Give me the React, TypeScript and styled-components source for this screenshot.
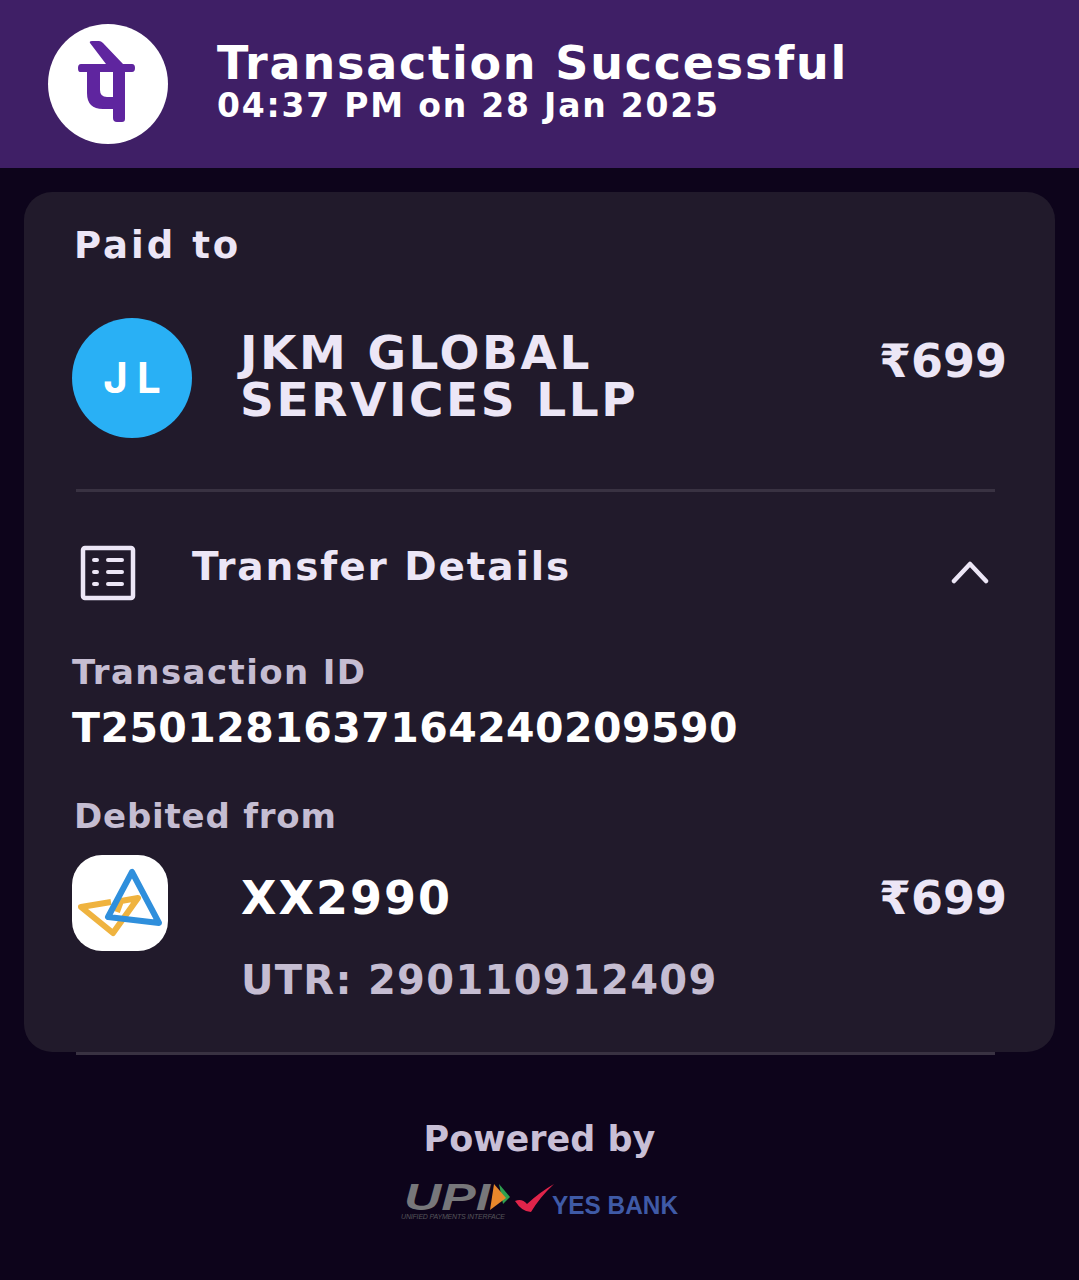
import styled, { createGlobalStyle } from "styled-components";

const GlobalStyle = createGlobalStyle`
  html, body {
    margin: 0;
    padding: 0;
    background: #0d041b;
  }
  body {
    font-family: "DejaVu Sans", "Noto Sans", sans-serif;
    font-weight: 700;
    color: #ece6f6;
  }
`;

const Page = styled.div`
  width: 1079px;
  height: 1280px;
  overflow: hidden;
  background: #0d041b;
`;

const Header = styled.header`
  height: 168px;
  box-sizing: border-box;
  padding-left: 48px;
  display: flex;
  align-items: center;
  gap: 49px;
  background: #3f1f66;
`;

const LogoCircle = styled.div`
  width: 120px;
  height: 120px;
  border-radius: 50%;
  background: #ffffff;
`;

const HeaderText = styled.div`
  display: flex;
  flex-direction: column;
`;

const HeaderTitle = styled.div`
  font-size: 46px;
  line-height: 44px;
  letter-spacing: 1.8px;
  color: #ffffff;
`;

const HeaderDate = styled.div`
  font-size: 33px;
  line-height: 42px;
  letter-spacing: 1.8px;
  color: #ffffff;
`;

const Card = styled.section`
  margin: 24px 24px 0;
  height: 860px;
  box-sizing: border-box;
  padding-top: 34px;
  border-radius: 28px;
  background: #211a2b;
`;

const SectionLabel = styled.div`
  margin-left: 50px;
  font-size: 37px;
  line-height: 40px;
  letter-spacing: 3px;
  color: #ece6f6;
`;

const PartyRow = styled.div`
  margin: 52px 48px 0 48px;
  display: grid;
  grid-template-columns: 120px 1fr auto;
  column-gap: 48px;
  height: 120px;
`;

const Avatar = styled.div`
  width: 120px;
  height: 120px;
  border-radius: 50%;
  background: #29b0f5;
  color: #ffffff;
  display: flex;
  align-items: center;
  justify-content: center;
  font-family: "Inter", sans-serif;
  font-size: 42px;
  line-height: 1;
  letter-spacing: 9px;
  text-indent: 9px;
`;

const PartyName = styled.div`
  padding-top: 11px;
  font-size: 47px;
  line-height: 47px;
  letter-spacing: 2.6px;
  color: #ece6f6;
`;

const Amount = styled.div`
  padding-top: 20px;
  font-size: 46px;
  line-height: 47px;
  color: #ece6f6;
`;

const Rule = styled.div`
  height: 3px;
  background: #393242;
`;

const CardRule = styled(Rule)`
  margin: 51px 60px 0 52px;
`;

const DetailsHead = styled.div`
  margin: 52px 66px 0 56px;
  display: grid;
  grid-template-columns: 56px 1fr auto;
  column-gap: 56px;
  align-items: center;
  height: 58px;
`;

const DetailsTitle = styled.div`
  margin-top: -12px;
  font-size: 39px;
  line-height: 44px;
  letter-spacing: 1.9px;
  color: #ece6f6;
`;

const MutedLabel = styled.div<{ $top: number; $inset?: number; $spacing: number }>`
  margin: ${(p) => p.$top}px 0 0 ${(p) => p.$inset ?? 48}px;
  font-size: 34px;
  line-height: 40px;
  letter-spacing: ${(p) => p.$spacing}px;
  color: #c5bdd2;
`;

const TransactionId = styled.div`
  margin: 14px 0 0 48px;
  font-size: 41px;
  line-height: 44px;
  letter-spacing: 0.45px;
  color: #ffffff;
`;

const BankRow = styled.div`
  margin: 19px 48px 0 48px;
  display: grid;
  grid-template-columns: 96px 1fr auto;
  column-gap: 73px;
  height: 96px;
`;

const BankIcon = styled.div`
  width: 96px;
  height: 96px;
  border-radius: 30px;
  background: #ffffff;
`;

const Account = styled.div`
  padding-top: 20px;
  font-size: 46px;
  line-height: 47px;
  letter-spacing: 2px;
  color: #ffffff;
`;

const Utr = styled.div`
  margin: 6px 0 0 217px;
  font-size: 40px;
  line-height: 47px;
  letter-spacing: 1.3px;
  color: #c5bdd2;
`;

const PageRule = styled(Rule)`
  margin: 0 84px 0 76px;
`;

const Footer = styled.footer`
  margin-top: 64px;
  display: flex;
  flex-direction: column;
  align-items: center;
`;

const PoweredBy = styled.div`
  font-size: 35px;
  line-height: 40px;
  color: #c8bfd6;
`;

const Brands = styled.div`
  margin-top: 14px;
  display: flex;
  align-items: center;
`;

const PhonePeMark = () => (
  <svg width="120" height="120" viewBox="0 0 120 120" fill="none">
    <path
      fillRule="evenodd"
      d="M42 19 Q41 17 44 17 L51 17 Q53 17 55 19 L75 40 L84 40 Q87 40 87 44 Q87 48 84 48 L77 48 L77 95 Q77 98 74 98 L69 98 Q65 98 65 94 L65 85 L55 85 Q39 85 39 69 L39 48 L32 48 Q30 48 30 44 Q30 40 33 40 L58 40 Z M52 48 L52 66 Q52 73 59 73 L65 73 L65 48 Z"
      fill="#5f259f"
    />
  </svg>
);

const DocListIcon = () => (
  <svg width="56" height="56" viewBox="0 0 56 56" fill="none" stroke="#ece6f6" strokeLinecap="round">
    <rect x="3" y="3" width="50" height="50" rx="2" strokeWidth="4.5" />
    <path d="M14 15h3M28 15h14M14 27h3M28 27h14M14 39h3M28 39h14" strokeWidth="4" />
  </svg>
);

const ChevronUp = () => (
  <svg width="38" height="24" viewBox="0 0 38 24" fill="none" stroke="#ece6f6" strokeWidth="4.5" strokeLinecap="round" strokeLinejoin="round">
    <path d="M3 20 L19 3 L35 20" />
  </svg>
);

const BankMark = () => (
  <svg width="96" height="96" viewBox="0 0 96 96" fill="none" strokeLinejoin="round">
    <path d="M39 47 L9 52 L41 78 L66 43 L49 46 L45 57" stroke="#efb33f" strokeWidth="6" />
    <path d="M60 17 L36 62 L87 68 Z" stroke="#2f8fdc" strokeWidth="6" />
  </svg>
);

const BrandLogos = () => (
  <svg width="290" height="52" viewBox="-3 0 290 52" fontFamily="Liberation Sans, Arial, sans-serif">
    <text x="6" y="37" fontSize="36" fontStyle="italic" fontWeight="700" fill="#77777a" textLength="86" lengthAdjust="spacingAndGlyphs">UPI</text>
    <path d="M101 11 L112 24 L105 31 Z" fill="#2f9e4f" />
    <path d="M96 11 L108 25 L92 37 Z" fill="#e8872b" />
    <text x="3" y="46" fontSize="7" fontStyle="italic" fontWeight="400" fill="#55555a" textLength="104">UNIFIED PAYMENTS INTERFACE</text>
    <path d="M117 28 Q124 25 129 31 Q142 19 156 11 Q142 24 133 39 Q124 39 117 28 Z" fill="#e0244a" />
    <text x="154" y="41" fontSize="26" fontWeight="700" fill="#3f5aa6" textLength="126" lengthAdjust="spacingAndGlyphs">YES BANK</text>
  </svg>
);

export default function App() {
  return (
    <Page>
      <GlobalStyle />
      <Header>
        <LogoCircle>
          <PhonePeMark />
        </LogoCircle>
        <HeaderText>
          <HeaderTitle>Transaction Successful</HeaderTitle>
          <HeaderDate>04:37 PM on 28 Jan 2025</HeaderDate>
        </HeaderText>
      </Header>
      <Card>
        <SectionLabel>Paid to</SectionLabel>
        <PartyRow>
          <Avatar>JL</Avatar>
          <PartyName>
            JKM GLOBAL
            <br />
            SERVICES LLP
          </PartyName>
          <Amount>₹699</Amount>
        </PartyRow>
        <CardRule />
        <DetailsHead>
          <DocListIcon />
          <DetailsTitle>Transfer Details</DetailsTitle>
          <ChevronUp />
        </DetailsHead>
        <MutedLabel $top={50} $spacing={1.4}>Transaction ID</MutedLabel>
        <TransactionId>T2501281637164240209590</TransactionId>
        <MutedLabel $top={46} $inset={50} $spacing={0.8}>Debited from</MutedLabel>
        <BankRow>
          <BankIcon>
            <BankMark />
          </BankIcon>
          <Account>XX2990</Account>
          <Amount>₹699</Amount>
        </BankRow>
        <Utr>UTR: 290110912409</Utr>
      </Card>
      <PageRule />
      <Footer>
        <PoweredBy>Powered by</PoweredBy>
        <Brands>
          <BrandLogos />
        </Brands>
      </Footer>
    </Page>
  );
}
